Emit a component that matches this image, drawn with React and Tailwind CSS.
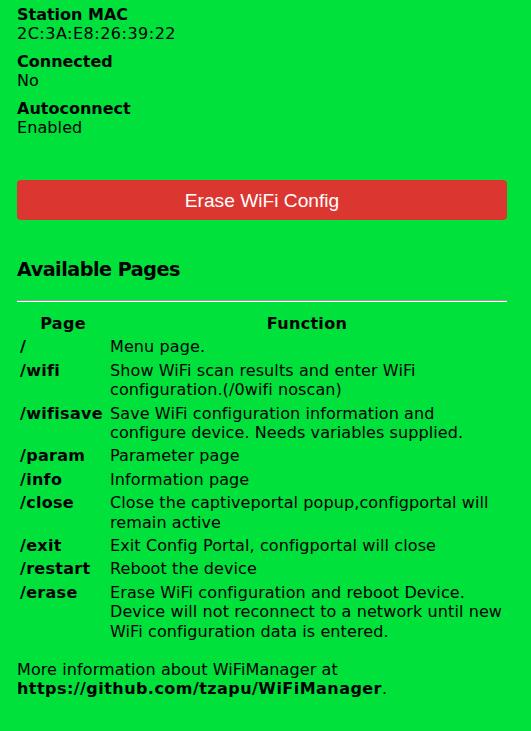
const info = [
  { label: "Station MAC", value: "2C:3A:E8:26:39:22", wide: true },
  { label: "Connected", value: "No" },
  { label: "Autoconnect", value: "Enabled" }
];

const pages = [
  { path: "/", text: "Menu page." },
  { path: "/wifi", text: "Show WiFi scan results and enter WiFi configuration.(/0wifi noscan)" },
  { path: "/wifisave", text: "Save WiFi configuration information and configure device. Needs variables supplied." },
  { path: "/param", text: "Parameter page" },
  { path: "/info", text: "Information page" },
  { path: "/close", text: "Close the captiveportal popup,configportal will remain active" },
  { path: "/exit", text: "Exit Config Portal, configportal will close" },
  { path: "/restart", text: "Reboot the device" },
  {
    path: "/erase",
    text: "Erase WiFi configuration and reboot Device. Device will not reconnect to a network until new WiFi configuration data is entered."
  }
];

export default function App() {
  return (
    <div className="min-h-[731px] bg-[#00e13c] pt-[5px] pr-[24px] pl-[17px] font-['DejaVu_Sans',sans-serif] text-[16px] leading-[19px] tracking-[0.1px] text-black">
      <dl>
        {info.map((item) => (
          <div key={item.label} className="mb-[9px]">
            <dt className="font-bold tracking-normal">{item.label}</dt>
            <dd className={item.wide ? "tracking-[0.5px]" : ""}>{item.value}</dd>
          </div>
        ))}
      </dl>

      <button className="mt-[43px] flex h-[40px] w-full items-center justify-center rounded-[4px] bg-[#dc3630] font-['Liberation_Sans',Arial,sans-serif] text-[19.2px] tracking-normal text-white">
        Erase WiFi Config
      </button>

      <h3 className="mt-[39px] text-[19.2px] font-bold leading-[22px] tracking-[-0.5px]">Available Pages</h3>
      <hr className="mt-[19px] border-0 border-t border-b border-t-[#9a9a9a] border-b-white" />

      <table className="mt-[9px] w-full border-separate border-spacing-[2px] leading-[19.4px]">
        <thead>
          <tr>
            <th className="w-[88px] p-[1px] text-center font-bold tracking-[0.3px]">Page</th>
            <th className="p-[1px] text-center font-bold tracking-[0.3px]">Function</th>
          </tr>
        </thead>
        <tbody>
          {pages.map((page) => (
            <tr key={page.path}>
              <td className="p-[1px] align-top font-bold tracking-[0.3px] whitespace-nowrap">{page.path}</td>
              <td className="p-[1px] align-top">{page.text}</td>
            </tr>
          ))}
        </tbody>
      </table>

      <p className="mt-[16px]">
        More information about WiFiManager at{" "}
        <a className="font-bold tracking-[0.45px]" href="#">
          https://github.com/tzapu/WiFiManager
        </a>
        .
      </p>
    </div>
  );
}
